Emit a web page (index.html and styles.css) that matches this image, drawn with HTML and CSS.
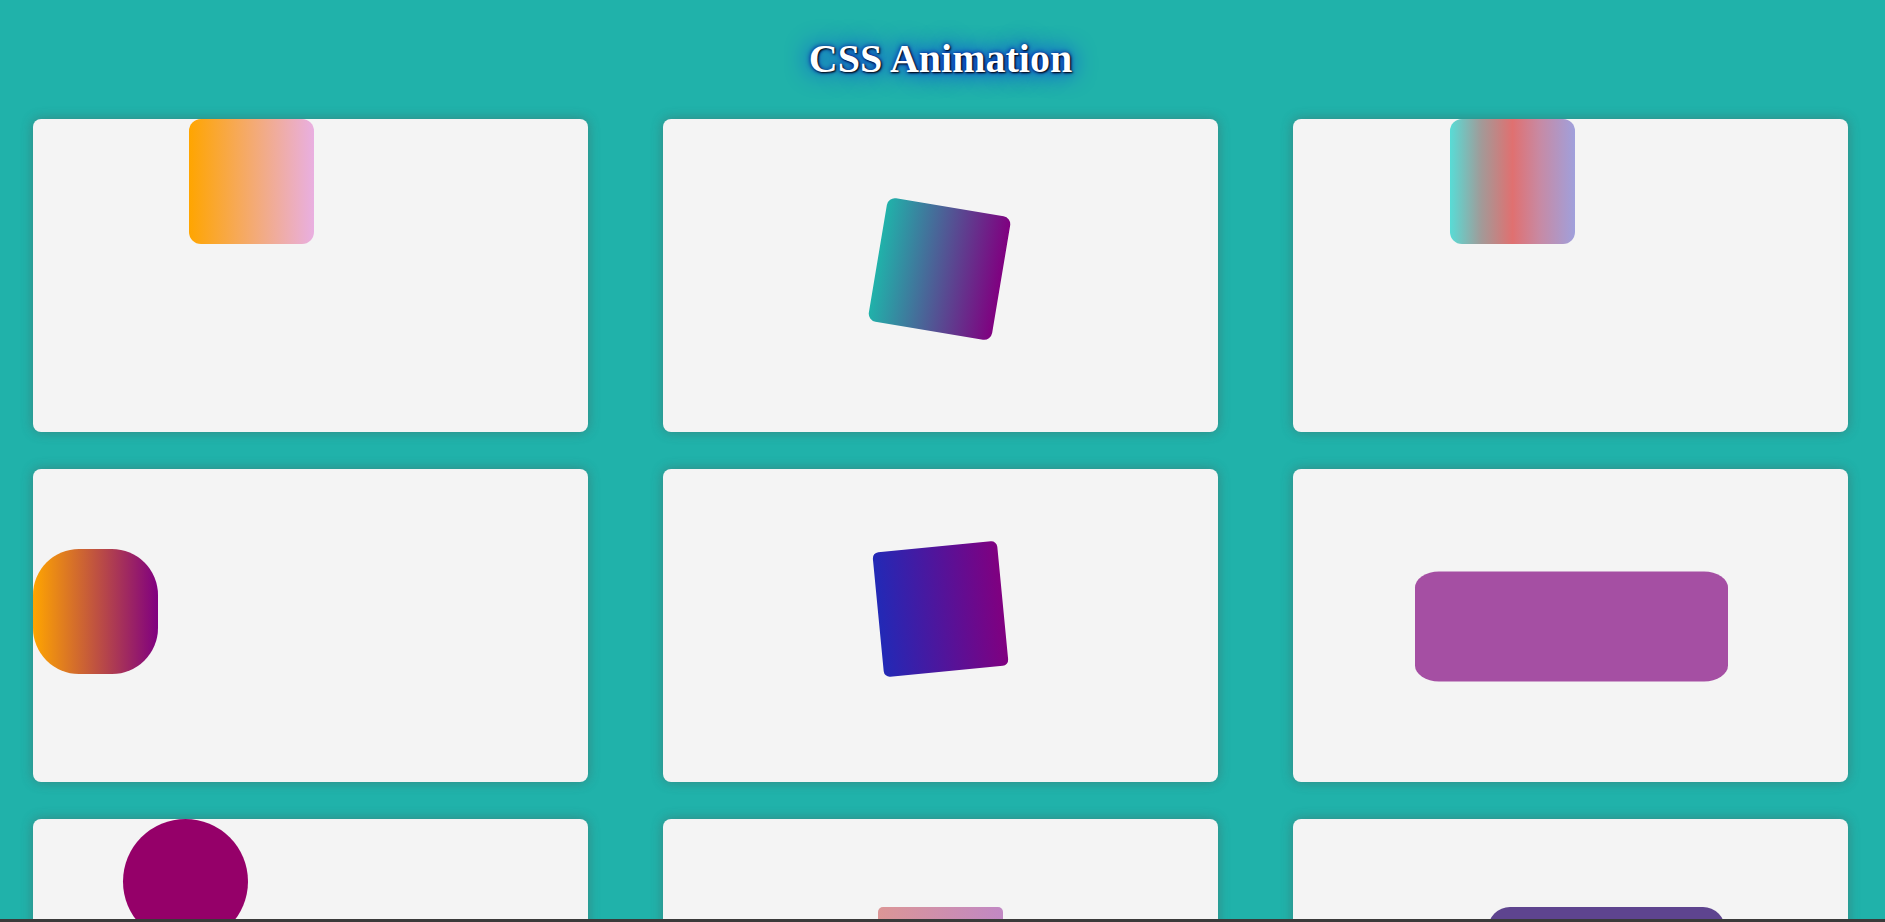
FILE: index.html
```html
<!DOCTYPE html>
<html lang="en">
<head>
<meta charset="utf-8">
<title>CSS Animation</title>
<link rel="stylesheet" href="styles.css">
</head>
<body>
<h1 class="title">CSS Animation</h1>
<main class="grid">
  <div class="card"><div class="shape slide"></div></div>
  <div class="card"><div class="shape spin"></div></div>
  <div class="card"><div class="shape slide rainbow"></div></div>
  <div class="card"><div class="shape blob"></div></div>
  <div class="card"><div class="shape tilt"></div></div>
  <div class="card"><div class="shape stretch"></div></div>
  <div class="card"><div class="shape ball"></div></div>
  <div class="card"><div class="shape rise"></div></div>
  <div class="card"><div class="shape pill"></div></div>
</main>
<div class="edge"></div>
</body>
</html>
```
FILE: styles.css
```css
html, body {
  margin: 0;
  padding: 0;
}
body {
  background: #20b2aa;
  font-family: "Liberation Serif", "Times New Roman", serif;
  min-height: 1300px;
}
.title {
  margin: 36px 0 37px;
  font-size: 40px;
  line-height: 46px;
  font-weight: bold;
  text-align: center;
  color: #ffffff;
  text-shadow: 1px 1px 2px #000000, 0 0 25px #0000ff, 0 0 5px #00008b;
  padding-right: 4px;
}
.grid {
  display: grid;
  grid-template-columns: repeat(3, 555px);
  column-gap: 75px;
  row-gap: 37px;
  padding: 0 0 40px 33px;
}
.card {
  height: 313px;
  background: #f4f4f4;
  border-radius: 8px;
  box-shadow: 0 0 12px rgba(80, 80, 80, 0.45);
  display: flex;
  align-items: center;
  justify-content: center;
  overflow: hidden;
}
.shape {
  width: 125px;
  height: 125px;
  flex: none;
  border-radius: 10px;
}
.slide {
  background: linear-gradient(to right, #ffa500, #e9afe1);
  transform: translate(-59px, -94px);
  border-radius: 12px;
}
.rainbow {
  background: linear-gradient(to right, #58dcd6 0%, #a29a98 25%, #e07070 50%, #c78aa4 72%, #a0a0dc 100%);
  transform: translate(-58px, -94px);
}
.spin {
  background: linear-gradient(to right, #20b2aa, #800080);
  transform: translate(-1px, -6.5px) rotate(9.5deg);
  border-radius: 8px;
}
.blob {
  background: linear-gradient(to right, #ffa500, #800080);
  border-radius: 46px;
  transform: translate(-215px, -14px);
}
.tilt {
  background: linear-gradient(to right, #2229b6, #800080);
  transform: translate(0, -16.5px) rotate(-5.5deg);
  border-radius: 6px;
}
.stretch {
  width: 313px;
  height: 110px;
  background: #a54fa3;
  border-radius: 24px / 16px;
  transform: translate(1px, 0.5px);
}
.ball {
  background: #950069;
  border-radius: 50%;
  transform: translate(-125px, -94px);
}
.rise {
  background: linear-gradient(to right, #dc9696, #c188c4);
  border-radius: 5px;
  transform: translate(0, -6px);
}
.pill {
  width: 237px;
  background: #5e448f;
  border-radius: 22px;
  transform: translate(36px, -6px);
}
.edge {
  position: fixed;
  left: 0;
  right: 0;
  bottom: 0;
  height: 3px;
  background: #3a3a3a;
}
```
